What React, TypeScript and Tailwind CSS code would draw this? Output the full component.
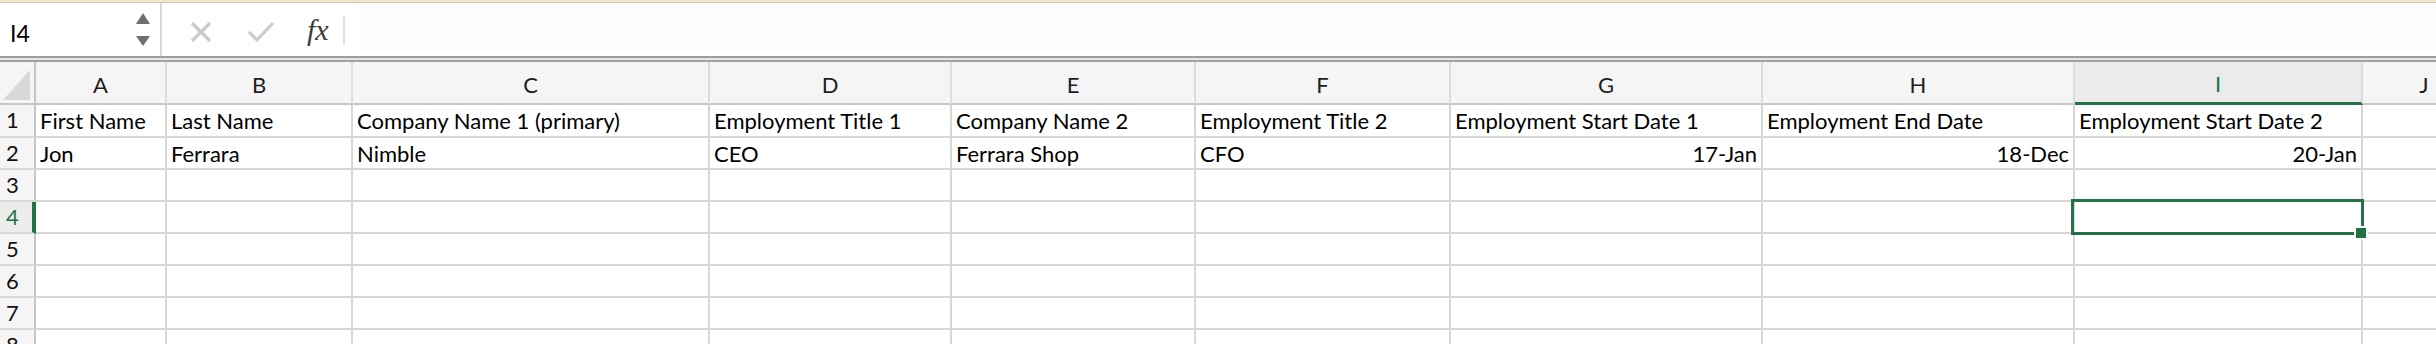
import React from "react";

const cols = [
  { w: "w-[131px]", l: "A" },
  { w: "w-[186px]", l: "B" },
  { w: "w-[357px]", l: "C" },
  { w: "w-[242px]", l: "D" },
  { w: "w-[244px]", l: "E" },
  { w: "w-[255px]", l: "F" },
  { w: "w-[312px]", l: "G" },
  { w: "w-[312px]", l: "H" },
  { w: "w-[288px]", l: "I" },
  { w: "w-[124px]", l: "J" },
];

const rows: string[][] = [
  [
    "First Name",
    "Last Name",
    "Company Name 1 (primary)",
    "Employment Title 1",
    "Company Name 2",
    "Employment Title 2",
    "Employment Start Date 1",
    "Employment End Date",
    "Employment Start Date 2",
    "",
  ],
  ["Jon", "Ferrara", "Nimble", "CEO", "Ferrara Shop", "CFO", "17-Jan", "18-Dec", "20-Jan", ""],
  ["", "", "", "", "", "", "", "", "", ""],
  ["", "", "", "", "", "", "", "", "", ""],
  ["", "", "", "", "", "", "", "", "", ""],
  ["", "", "", "", "", "", "", "", "", ""],
  ["", "", "", "", "", "", "", "", "", ""],
  ["", "", "", "", "", "", "", "", "", ""],
];

const rightAligned = (r: number, c: number) => r === 1 && c >= 6 && c <= 8;

function FormulaBar() {
  return (
    <div className="flex h-[53px] w-full bg-white">
      <div className="flex h-full w-[162px] shrink-0 items-start border-r-2 border-[#d8d8d8] pl-[10px] pr-[10px]">
        <span className="mt-[17px] text-[23px] leading-[26px] text-black">I4</span>
        <svg className="ml-auto mt-[10px]" width="14" height="34" viewBox="0 0 14 34">
          <polygon points="7,0 14,11 0,11" fill="#6f6f6f" />
          <polygon points="0,23 14,23 7,33" fill="#6f6f6f" />
        </svg>
      </div>
      <div className="flex h-full items-start">
        <svg className="ml-[28px] mt-[18px]" width="22" height="22" viewBox="0 0 22 22">
          <path d="M2 2 L20 20 M20 2 L2 20" stroke="#cbcbcb" strokeWidth="3.2" strokeLinecap="butt" fill="none" />
        </svg>
        <svg className="ml-[35px] mt-[18px]" width="28" height="22" viewBox="0 0 28 22">
          <path d="M2 11 L10 19 L26 2" stroke="#cbcbcb" strokeWidth="3.2" fill="none" />
        </svg>
        <span className="ml-[32px] mt-[12px] font-['Liberation_Serif',serif] text-[30px] italic leading-none text-[#3c3c3c]">
          fx
        </span>
        <div className="ml-[14px] mt-[13px] h-[29px] w-[2px] bg-[#e2e2e2]" />
      </div>
      <div className="ml-[14px] mt-[1px] h-[46px] flex-1 bg-[#fcfcfc]" />
    </div>
  );
}

export default function App() {
  return (
    <div className="h-[344px] w-[2436px] overflow-hidden bg-white font-['Lato',sans-serif] text-black">
      <div className="h-[2px] bg-[#f3e5c6]" />
      <div className="h-[1px] bg-[#d2c8ae]" />
      <FormulaBar />
      <div className="h-[2px] bg-[#9d9d9d]" />
      <div className="h-[2px] bg-[#e6e6e6]" />
      <div className="h-[2px] bg-[#a3a3a3]" />

      {/* column headers */}
      <div className="flex h-[43px]">
        <div className="relative h-full w-[36px] shrink-0 border-b-2 border-r-2 border-b-[#c6c6c6] border-r-[#c6c6c6] bg-[#f5f5f5]">
          <svg className="absolute left-0 top-0" width="34" height="41" viewBox="0 0 34 41">
            <polygon points="3,38 30,38 30,8" fill="#d8d8d8" />
          </svg>
        </div>
        {cols.map((c) =>
          c.l === "I" ? (
            <div
              key={c.l}
              className={`${c.w} flex h-full shrink-0 items-center justify-center border-b-[3px] border-r-2 border-b-[#217346] border-r-[#dcdcdc] bg-[#ebebeb] pt-[3px] text-[22px] text-[#217346]`}
            >
              {c.l}
            </div>
          ) : (
            <div
              key={c.l}
              className={`${c.w} flex h-full shrink-0 items-center justify-center border-b-2 border-r-2 border-b-[#c6c6c6] border-r-[#dddddd] bg-[#f5f5f5] pt-[3px] text-[22px] text-[#1e1e1e]`}
            >
              {c.l}
            </div>
          )
        )}
      </div>

      {rows.map((row, r) => (
        <div key={r} className={`flex ${r === 0 ? "h-[33px]" : "h-[32px]"}`}>
          {r === 3 ? (
            <div className="h-full w-[36px] shrink-0 border-b-2 border-r-[4px] border-b-[#d9d9d9] border-r-[#217346] bg-[#ececec] pl-[6px] text-[22px] leading-[30px] text-[#217346]">
              {r + 1}
            </div>
          ) : (
            <div className="h-full w-[36px] shrink-0 border-b-2 border-r-2 border-b-[#d9d9d9] border-r-[#c6c6c6] bg-[#f5f5f5] pl-[6px] text-[22px] leading-[30px] text-[#111111]">
              {r + 1}
            </div>
          )}
          {row.map((v, c) => (
            <div
              key={c}
              className={`${cols[c].w} relative h-full shrink-0 whitespace-nowrap border-b-2 border-r-2 border-[#d6d6d6] px-[4px] pt-[1px] text-[22px] leading-[30px] ${
                rightAligned(r, c) ? "text-right" : "text-left"
              }`}
            >
              {v}
              {r === 3 && c === 8 && (
                <>
                  <div className="absolute left-[-4px] top-[-3px] z-10 h-[36px] w-[293px] border-[3px] border-[#217346]" />
                  <div className="absolute left-[279px] top-[24px] z-20 h-[14px] w-[14px] border-2 border-white bg-[#217346]" />
                </>
              )}
            </div>
          ))}
        </div>
      ))}
    </div>
  );
}
